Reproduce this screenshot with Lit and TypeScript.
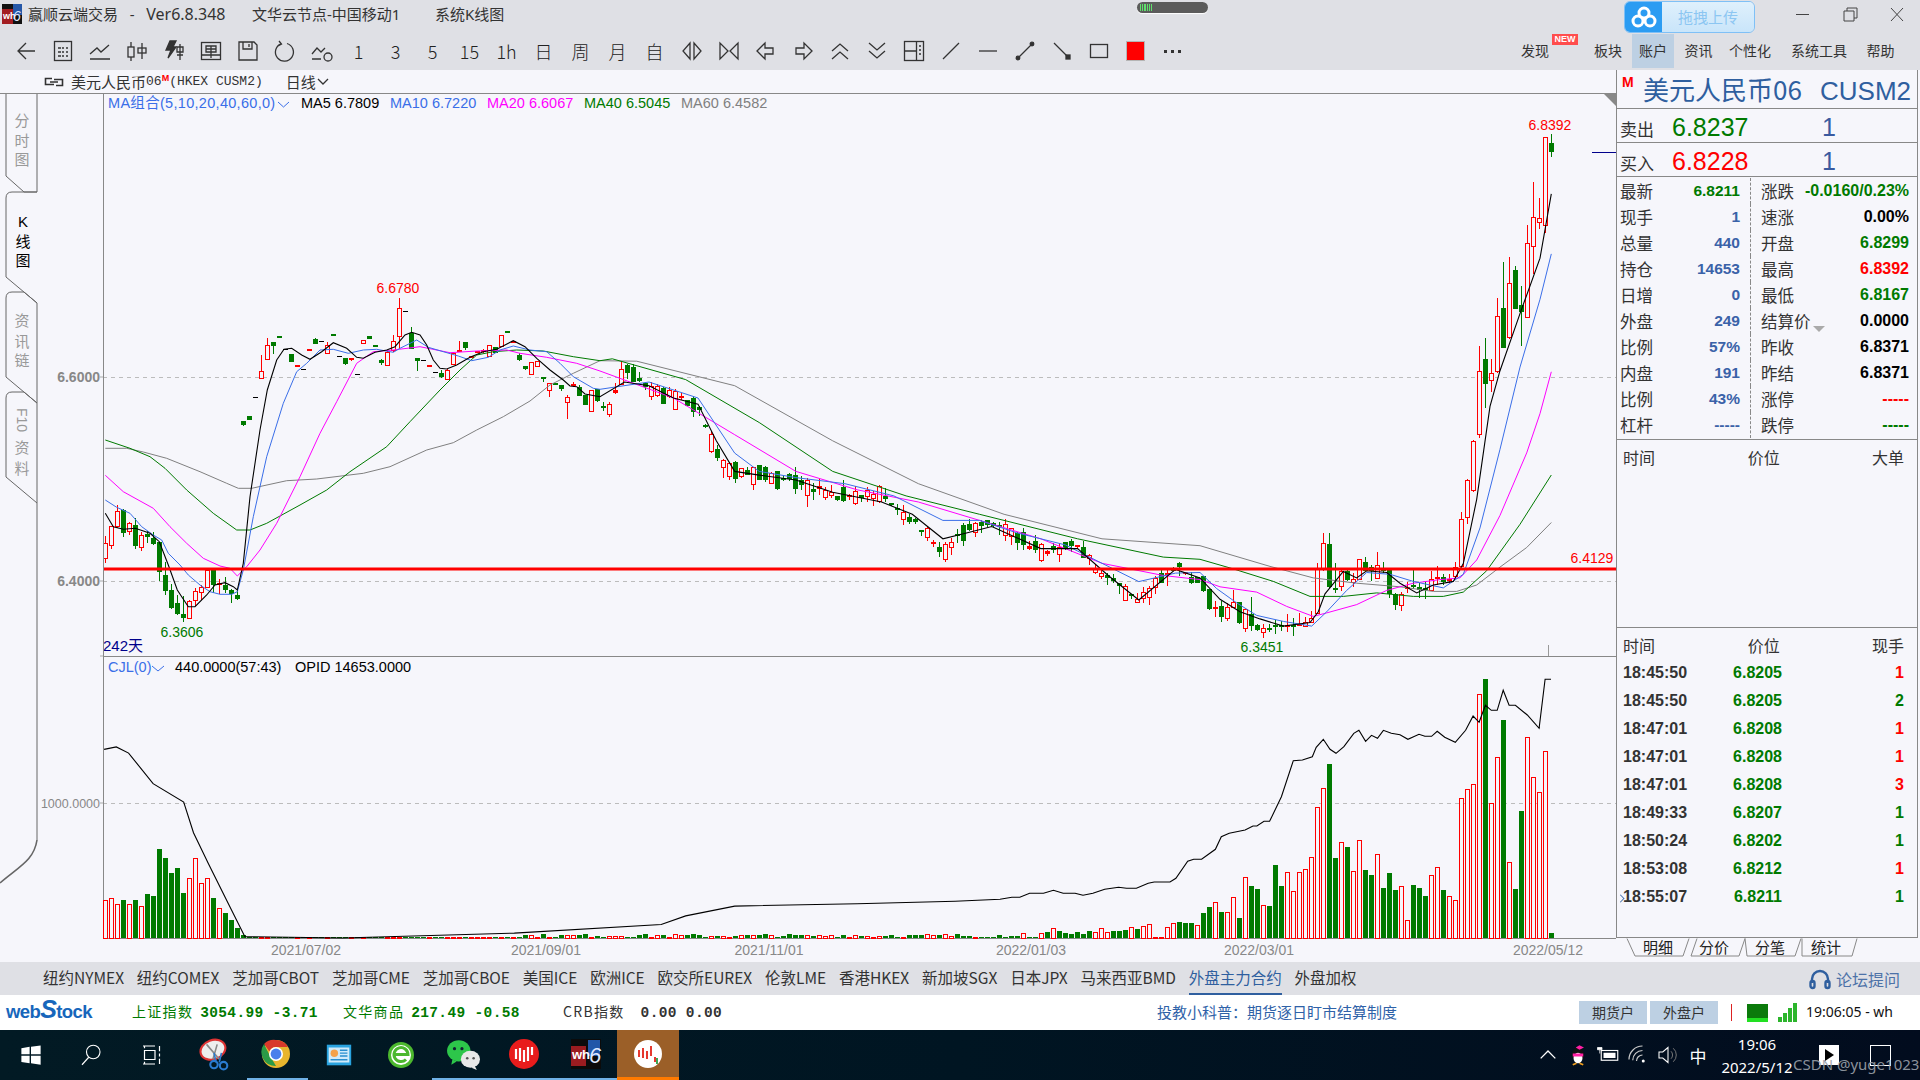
import { LitElement, html, svg, css, nothing } from 'lit';
import { customElement } from 'lit/decorators.js';

type Pt = number[];
const BG = '#f6f6fb';
const RED = '#ff0000';
const GREEN = '#007a00';

// candles read off the chart: [kind, bodyTop, bodyBottom, wickTop, wickBottom], kind 1 red, 0 green, 2 black dash
const LEFT: number[][] = [
  [1,818,862,798,878],[1,768,826,768,836],[1,724,770,706,775],[0,720,788,716,800],[1,760,785,757,795],[0,766,830,745,836],
  [1,796,832,785,842],[0,793,803,782,818],[0,803,822,785,825],[0,817,908,817,932],[0,915,962,875,975],[0,960,1014,942,1016],
  [0,1000,1034,975,1034],[0,1033,1046,978,1055],[1,992,1042,990,1042],[1,962,990,955,1008],[1,950,964,945,990],[1,900,952,895,955],
  [0,900,945,895,970],[1,940,946,928,972],[0,945,960,922,968],[0,960,972,958,998],[0,976,988,960,990],[0,452,465,452,468],
  [0,438,450,438,450],[2,381,383,381,383],[1,302,322,255,322],[1,226,268,205,268],[0,216,228,216,252],[0,198,204,198,204],
  [2,236,238,236,238],[0,252,276,252,276],[1,286,290,286,290],[2,298,300,298,300],[1,238,242,238,242],[0,208,222,205,222],
  [2,214,216,214,216],[1,226,250,216,252],[0,192,198,192,198],[2,259,261,259,261],[0,265,282,265,286],[1,265,272,265,272],
  [2,313,315,313,315],[1,211,221,211,221],[0,198,206,198,206],[0,226,231,226,231],[0,270,278,266,285],[1,246,284,240,284],
  [1,212,240,195,245],[1,115,200,85,238],[2,124,126,124,126],[0,188,236,172,236],[0,265,275,265,302],[2,271,273,271,273],
  [1,286,290,286,290],[2,307,309,307,309],[0,310,323,300,323],[1,300,328,296,330],[1,250,284,245,284],[1,239,246,213,246],
  [0,217,234,217,240],[1,258,262,258,262],[1,244,250,244,250],[1,241,246,238,250],[1,224,256,224,258],[0,232,250,232,250],
  [1,194,228,194,228],[0,184,188,184,188],[1,212,216,212,216],[0,255,270,250,272],[0,289,299,289,299],[1,275,310,275,310],
  [1,272,286,272,286],[0,322,326,322,335],[1,340,360,340,380],[0,338,342,338,342],[0,346,358,346,362],[1,382,398,376,446],
  [1,341,348,335,350],[0,350,376,345,376],[0,375,404,375,404],[1,361,424,361,424],[0,358,395,358,395],
];
// newest first, from candle 241 backwards
const RIGHT: number[][] = [
  [0,92,118,68,132],[1,75,320,75,345],[1,303,315,245,333],[1,300,382,202,460],[1,371,577,322,580],[0,547,566,492,660],
  [0,448,556,437,556],[1,485,635,412,640],[0,554,665,426,665],[1,578,733,526,735],[1,735,754,697,790],[0,697,766,638,835],
  [1,732,908,660,918],[1,928,1066,925,1070],[1,1037,1140,1034,1160],[1,1146,1278,1126,1280],[1,1280,1305,1265,1305],[1,1314,1320,1300,1325],
  [0,1308,1322,1300,1330],[1,1308,1313,1277,1330],[1,1312,1342,1292,1345],[0,1337,1343,1320,1368],[0,1335,1342,1325,1365],[0,1330,1335,1288,1340],
  [1,1336,1342,1322,1352],[1,1354,1384,1350,1402],[0,1356,1388,1352,1400],[0,1288,1356,1288,1365],[0,1284,1290,1266,1295],[1,1273,1310,1238,1312],
  [0,1280,1292,1275,1318],[0,1266,1290,1252,1292],[1,1258,1314,1258,1316],[1,1313,1322,1296,1335],[0,1290,1316,1285,1320],[1,1292,1334,1288,1346],
  [0,1339,1345,1268,1352],[0,1216,1335,1184,1338],[1,1213,1284,1184,1292],[1,1285,1408,1268,1410],[1,1423,1433,1404,1436],[1,1433,1443,1420,1448],
  [1,1438,1443,1408,1445],[0,1442,1446,1422,1472],[1,1443,1447,1412,1462],[0,1443,1448,1432,1458],[0,1443,1447,1428,1466],[0,1450,1454,1440,1462],
  [1,1451,1462,1440,1478],[0,1443,1456,1440,1460],[0,1412,1445,1364,1458],[1,1398,1452,1398,1462],[0,1378,1436,1378,1440],[1,1378,1392,1345,1394],
  [1,1392,1424,1380,1430],[0,1388,1420,1375,1434],[1,1392,1396,1375,1420],[0,1340,1397,1340,1400],[0,1306,1347,1306,1350],
];
// the run between both crops follows this path (overview coordinates)
const MID_PATH: Pt[] = [[470,325],[497,335],[510,300],[530,318],[570,330],[585,370],[595,385],[620,388],[650,392],[680,405],[720,405],[745,425],[770,450],[790,432],[810,428],[850,450],[880,445],[900,470],[930,490],[960,462],[985,480],[1010,505],[1040,515],[1065,510]];

const z9 = (p: Pt[]) => p.map(([x, y]) => [100 + x / 3, 270 + y / 3]);
const z10 = (p: Pt[]) => p.map(([x, y]) => [1200 + x / 3, 110 + y / 2.8]);
const z12 = (p: Pt[]) => p.map(([x, y]) => [1000 + x / 2.53, 660 + y / 3]);
const ov = (p: Pt[]) => p.map(([x, y]) => [x * 1.2245, y * 1.2245]);
const pathOf = (p: Pt[]) => 'M' + p.map(([x, y]) => `${x.toFixed(1)} ${y.toFixed(1)}`).join('L');
const xOf = (i: number) => 105.33 + 6 * i;

let seed = 7;
const rnd = () => { seed = (seed * 16807) % 2147483647; return seed / 2147483647; };

function guideAt(x: number) {
  const pts = ov(MID_PATH);
  for (let k = 1; k < pts.length; k++) {
    if (x <= pts[k][0]) {
      const [a, b] = [pts[k - 1], pts[k]];
      return a[1] + ((b[1] - a[1]) * (x - a[0])) / (b[0] - a[0]);
    }
  }
  return pts[pts.length - 1][1];
}

interface Candle { k: number; top: number; bot: number; wt: number; wb: number }
const candles: Candle[] = [];
LEFT.forEach(([k, a, b, c, d]) => candles.push({ k, top: 270 + a / 3, bot: 270 + b / 3, wt: 270 + c / 3, wb: 270 + d / 3 }));
for (let i = 83; i < 183; i++) {
  const g = guideAt(xOf(i));
  const h = 2 + rnd() * rnd() * 20;
  const k = rnd() > 0.55 ? 1 : 0;
  const top = g - h / 2 + (rnd() - 0.5) * 6;
  candles.push({ k, top, bot: top + h, wt: top - rnd() * rnd() * 10, wb: top + h + rnd() * rnd() * 12 });
}
[...RIGHT].reverse().forEach(([k, a, b, c, d]) => candles.push({ k, top: 110 + a / 2.8, bot: 110 + b / 2.8, wt: 110 + c / 2.8, wb: 110 + d / 2.8 }));

const MA5 = [...z9([[16,730],[40,770],[70,778],[106,775],[150,790],[178,815],[205,885],[232,960],[265,1010],[285,1010],[320,975],[345,945],[375,938],[400,950],[412,960],[430,880],[450,680],[480,480],[502,360],[530,270],[552,238],[575,235],[605,255],[630,268],[665,245],[700,218],[740,235],[770,262],[790,265],[825,247],[860,240],[885,230],[915,195],[935,187],[960,195],[980,225],[1000,270],[1020,295],[1040,297],[1070,285],[1110,262],[1150,245],[1190,238],[1215,225],[1240,212],[1275,230],[1310,265],[1350,300],[1390,330],[1410,348],[1430,350],[1455,372],[1500,380]]),
  ...ov([[510,312],[530,315],[550,325],[570,330],[585,360],[600,385],[620,388],[650,392],[680,402],[720,410],[745,420],[770,440],[790,435],[810,430],[850,448],[880,448],[905,470],[930,490],[960,465]]),
  ...z10([[0,1310],[60,1370],[120,1405],[180,1425],[250,1445],[330,1435],[355,1405],[375,1355],[430,1292],[470,1310],[500,1290],[560,1295],[600,1325],[650,1352],[700,1330],[760,1320],[790,1270],[830,1090],[870,830],[900,730],[960,570],[1020,415],[1054,235]])];
const MA10 = [...z9([[16,690],[50,712],[90,730],[125,770],[160,795],[185,810],[205,850],[240,885],[265,915],[300,945],[330,965],[360,973],[395,973],[412,965],[430,900],[460,740],[500,560],[550,400],[590,305],[620,280],[660,240],[700,238],[745,250],[790,240],[830,238],[880,247],[900,235],[950,210],[985,232],[1030,245],[1075,258],[1115,272],[1165,262],[1200,240],[1240,228],[1290,240],[1340,245],[1380,280],[1420,320],[1480,355],[1500,358]]),
  ...ov([[530,312],[570,325],[600,370],[620,385],[650,390],[690,395],[730,405],[770,425],[800,425],[830,435],[870,445],[900,460],[930,475],[960,468]]),
  ...z10([[0,1295],[50,1340],[110,1380],[170,1415],[250,1432],[335,1445],[380,1405],[440,1345],[500,1295],[570,1300],[640,1320],[730,1338],[790,1300],[840,1170],[900,950],[960,720],[1020,530],[1054,403]])];
const MA20 = [...z9([[16,616],[70,665],[160,715],[210,770],[260,820],[310,865],[360,888],[390,895],[412,918],[440,890],[480,840],[530,760],[600,620],[660,490],[710,395],[770,280],[820,245],[880,240],[960,230],[1050,248],[1130,243],[1220,240],[1260,250],[1340,262],[1430,280],[1500,303]]),
  ...ov([[550,325],[600,355],[650,385],[700,400],[750,410],[800,425],[850,440],[900,460],[950,470]]),
  ...z10([[0,1315],[60,1335],[170,1350],[260,1390],[340,1418],[380,1408],[470,1385],[560,1345],[640,1325],[720,1315],[780,1310],[830,1260],[900,1135],[980,960],[1020,850],[1054,733]])];
const MA40 = [...z9([[16,510],[90,535],[150,560],[195,595],[260,660],[340,730],[410,780],[450,780],[500,760],[600,705],[680,660],[750,605],[860,530],[930,455],[1020,360],[1080,300],[1130,255],[1180,245],[1250,240],[1330,243],[1420,260],[1500,272]]),
  ...ov([[500,293],[560,310],[620,345],[680,385],[740,405],[800,420],[880,440],[950,455]]),
  ...z10([[0,1258],[100,1285],[220,1320],[330,1362],[430,1362],[530,1352],[640,1362],[730,1362],[790,1350],[860,1290],[960,1160],[1054,1022]])];
const MA60 = [...z9([[16,535],[80,535],[130,546],[200,565],[300,605],[380,640],[415,655],[455,655],[560,632],[650,627],[790,610],[870,590],[980,540],[1060,518],[1130,480],[1210,440],[1290,393],[1350,345],[1420,310],[1500,272]]),
  ...ov([[520,295],[600,315],[680,360],[750,395],[820,420],[900,440]]),
  ...z10([[0,1220],[210,1278],[340,1310],[470,1325],[600,1335],[700,1348],[770,1348],[830,1330],[900,1280],[980,1225],[1054,1155]])];
const CJL = [...ov([[85,612],[95,610],[105,615],[125,640],[150,655],[158,680],[170,705],[185,735],[200,765],[280,766],[420,762],[540,755],[560,748],[600,740],[700,738],[780,736]]),
  ...z12([[0,718],[30,712],[50,712],[75,700],[110,700],[135,691],[160,700],[190,700],[210,706],[235,700],[265,688],[300,682],[320,685],[345,685],[375,670],[390,666],[430,666],[445,655],[475,604],[490,598],[510,598],[545,568],[560,530],[580,520],[620,510],[640,498],[650,498],[668,484],[682,484],[712,410],[742,302],[765,300],[790,290],[800,262],[818,238],[835,268],[850,280],[870,260],[895,220],[908,211],[925,244],[940,226],[955,235],[970,211],[990,220],[1012,224],[1032,238],[1060,223],[1075,229],[1092,229],[1106,214],[1125,232],[1152,247],[1178,211],[1197,168],[1212,187],[1228,136],[1243,151],[1258,151],[1273,91],[1288,136],[1304,136],[1334,165],[1364,205],[1379,58],[1394,58]])];

// volume bar tops in crop coordinates, newest first: [isRed, top]
const VOL_RIGHT: number[][] = [[0,820],[1,274],[1,397],[1,352],[1,232],[0,453],[0,687],[1,607],[0,180],[1,292],[1,430],[0,58],[1,103],[1,373],[1,388],[1,415],[1,720],[1,709],[0,690],[1,622],[1,646],[0,708],[0,684],[0,675],[1,781],[1,679],[0,690],[0,639],[0,684],[1,583],[0,645],[0,630],[1,541],[1,634],[0,561],[1,547],[0,594],[0,312],[1,385],[1,442],[1,592],[1,628],[1,637],[1,694],[1,637],[0,678],[0,615],[0,738],[1,736],[0,687],[0,678],[1,652],[0,774],[1,712],[1,757],[0,756],[1,727],[0,741],[0,759],[1,796],[0,789],[0,789],[0,786],[1,790],[1,802],[1,832],[1,832],[1,793],[1,799],[0,807],[1,802],[0,811],[0,813],[0,813],[1,817],[1,805],[1,817],[0,813],[0,823],[0,816],[0,823],[0,820],[0,813],[1,805],[0,816],[1,820],[0,832],[0,832],[1,820],[0,828],[0,828],[0,832],[0,826]];
const VOL_LEFT = [38,40,34,38,34,38,32,44,42,89,80,65,70,45,60,80,55,60,40,30,25,18,10,3];
const volumes: { red: boolean; h: number }[] = [];
for (let i = 0; i < 242; i++) {
  const back = 241 - i;
  if (back < VOL_RIGHT.length) volumes.push({ red: VOL_RIGHT[back][0] === 1, h: (835 - VOL_RIGHT[back][1]) / 3 });
  else if (i < VOL_LEFT.length) volumes.push({ red: candles[i].k === 1, h: VOL_LEFT[i] });
  else volumes.push({ red: candles[i].k === 1, h: i < 70 ? 0.8 : 1 + rnd() * 3 });
}

const QUOTES: [string, string, string, string, string, string][] = [
  ['最新', '6.8211', 'g', '涨跌', '-0.0160/0.23%', 'g'],
  ['现手', '1', 'b', '速涨', '0.00%', 'k'],
  ['总量', '440', 'b', '开盘', '6.8299', 'g'],
  ['持仓', '14653', 'b', '最高', '6.8392', 'r'],
  ['日增', '0', 'b', '最低', '6.8167', 'g'],
  ['外盘', '249', 'b', '结算价', '0.0000', 'k'],
  ['比例', '57%', 'b', '昨收', '6.8371', 'k'],
  ['内盘', '191', 'b', '昨结', '6.8371', 'k'],
  ['比例', '43%', 'b', '涨停', '-----', 'r'],
  ['杠杆', '-----', 'b', '跌停', '-----', 'g'],
];
const TICKS: [string, string, string, string][] = [
  ['18:45:50', '6.8205', '1', 'r'], ['18:45:50', '6.8205', '2', 'g'], ['18:47:01', '6.8208', '1', 'r'],
  ['18:47:01', '6.8208', '1', 'r'], ['18:47:01', '6.8208', '3', 'r'], ['18:49:33', '6.8207', '1', 'g'],
  ['18:50:24', '6.8202', '1', 'g'], ['18:53:08', '6.8212', '1', 'r'], ['18:55:07', '6.8211', '1', 'g'],
];
const EXCHANGES = ['纽约NYMEX', '纽约COMEX', '芝加哥CBOT', '芝加哥CME', '芝加哥CBOE', '美国ICE', '欧洲ICE', '欧交所EUREX', '伦敦LME', '香港HKEX', '新加坡SGX', '日本JPX', '马来西亚BMD', '外盘主力合约', '外盘加权'];

const ico = (body: unknown) => html`<svg class="ico" viewBox="0 0 24 24" width="24" height="24">${body}</svg>`;
const TOOLS: unknown[] = [
  ico(svg`<path d="M21 12H5M12 4l-8 8 8 8"/>`),
  ico(svg`<rect x="3.5" y="2.5" width="17" height="19"/><path d="M7 9h3M11 9h2M15 9h2M7 13h3M11 13h2M15 13h2M7 17h3M11 17h2M15 17h2"/>`),
  ico(svg`<path d="M2 15l7-6 4 4 8-7M2 20h20"/>`),
  ico(svg`<rect x="3" y="8" width="6" height="10"/><path d="M6 3v5M6 18v4M17 4v16"/><rect x="13" y="9" width="8" height="5"/>`),
  ico(svg`<path d="M8 2h6l-3 6h3L6 19l3-8H4z" class="fill"/><path d="M15 8h6v5h-6zM15 16h6M18 5v16"/>`),
  ico(svg`<rect x="2.5" y="3.5" width="19" height="17"/><path d="M7 7h10v6H7zM7 10h10M12 7v12M2.5 16h19"/>`),
  ico(svg`<path d="M3 3h15l3 3v15H3zM7 3v7h9V3M13 5v3"/>`),
  ico(svg`<path d="M14 4.5a9 9 0 1 1-6 .3M6 2l2.5 3L5 7"/>`),
  ico(svg`<path d="M2 15l5-6 4 4 4-4M2 20h9"/><circle cx="18" cy="18" r="4"/>`),
  '1', '3', '5', '15', '1h', '日', '周', '月', '自',
  ico(svg`<path d="M10 4v16l-7-8zM14 4v16l7-8z"/>`),
  ico(svg`<path d="M3 4v16l8-8zM21 4v16l-8-8z"/>`),
  ico(svg`<path d="M3 12l8-8v5h8v6h-8v5z"/>`),
  ico(svg`<path d="M21 12l-8-8v5H5v6h8v5z"/>`),
  ico(svg`<path d="M4 12l8-7 8 7M4 20l8-7 8 7"/>`),
  ico(svg`<path d="M4 4l8 7 8-7M4 12l8 7 8-7"/>`),
  ico(svg`<rect x="2.5" y="2.5" width="19" height="19"/><path d="M2.5 12h12M14.5 2.5v19M17 7h2M17 11h2M17 15h2"/>`),
  ico(svg`<path d="M4 20L20 4"/>`),
  ico(svg`<path d="M3 12h18"/>`),
  ico(svg`<path d="M5 19L19 5"/><circle cx="5" cy="19" r="1.8" class="fill"/><circle cx="19" cy="5" r="1.8" class="fill"/>`),
  ico(svg`<path d="M4 4l15 15"/><rect x="16" y="16" width="4" height="4" class="fill"/>`),
  ico(svg`<rect x="3.5" y="5.5" width="17" height="13"/>`),
  html`<span class="red-square"></span>`,
  html`<span class="more"><i></i><i></i><i></i></span>`,
];

@customElement('app-root')
export class AppRoot extends LitElement {
  static styles = css`
    :host { display: block; width: 1920px; height: 1080px; overflow: hidden; background: #f6f6fb;
      font-family: "Noto Sans CJK SC", "Noto Sans", sans-serif; color: #333; position: relative; }
    svg text { font-family: "Liberation Sans", "Noto Sans CJK SC", sans-serif; }

    .titlebar { height: 34px; background: #dfe0e5; display: flex; align-items: center; font-size: 15px; position: relative; box-sizing: border-box; padding-bottom: 7px; font-family: "Noto Sans", "Noto Sans CJK SC", sans-serif; }
    .logo { width: 20px; height: 20px; margin: 0 6px 0 2px; flex: none; }
    .ver { width: 224px; white-space: pre; }
    .ver i { font-style: normal; font-size: 16px; }
    .node { width: 183px; }
    .pill { position: absolute; left: 1137px; top: 2px; width: 71px; height: 11px; border-radius: 6px; background: #5b5b5b; display: flex; gap: 1px; padding: 2px 3px; box-sizing: border-box; box-shadow: 0 1px 1px #fff; }
    .pill i { width: 1.2px; background: #5fe06c; }
    .upload { position: absolute; left: 1624px; top: 1px; width: 131px; height: 32px; border-radius: 6px; display: flex; overflow: hidden; border: 1px solid #7fc0f6; box-sizing: border-box; }
    .upload .cl { width: 37px; background: #2b9cf2; display: flex; align-items: center; justify-content: center; }
    .upload .tx { flex: 1; background: linear-gradient(#dff0fc, #c9e5fa); color: #8cc6f2; text-align: center; line-height: 30px; font-family: "Noto Sans CJK SC", sans-serif; font-size: 15px; }
    .winbtns { position: absolute; left: 1779px; top: 3px; display: flex; }
    .winbtns svg { width: 47px; height: 24px; fill: none; stroke: #444; stroke-width: 1; }

    .toolbar { height: 36px; box-sizing: border-box; background: #dfe0e5; display: flex; align-items: center; padding: 0 20px 2px 7px; }
    .tool { width: 37px; height: 30px; display: flex; align-items: center; justify-content: center; font-size: 18px; font-weight: 300; color: #222; flex: none; }
    .ico { fill: none; stroke: #333; stroke-width: 1.3; }
    .ico .fill { fill: #333; }
    .red-square { width: 17px; height: 18px; background: #ff0000; border: 1px solid #b5b5b5; }
    .more { display: flex; gap: 4px; }
    .more i { width: 3px; height: 3px; background: #333; }
    .menu { margin-left: auto; display: flex; height: 34px; box-sizing: border-box; align-self: flex-start; font-size: 14px; }
    .menu span { display: flex; align-items: center; justify-content: center; position: relative; padding-bottom: 3px; box-sizing: border-box; }
    .menu .on { background: #bdd0e3; }
    .new { position: absolute; left: 48px; top: 0; width: 26px; height: 11px; background: #ff4d4d; color: #fff; font: normal bold 9px/11px "Liberation Sans", sans-serif; text-align: center; }

    .body { display: flex; height: 892px; }
    .left { width: 1616px; display: flex; flex-direction: column; }
    .subhead { height: 23px; border-bottom: 1px solid #888; display: flex; align-items: center; padding-left: 44px; font-size: 15px; line-height: 22px; }
    .subhead svg { margin-right: 7px; }
    .subhead sup { color: #f00; font-size: 9px; font-weight: 700; line-height: 1; margin-top: -6px; font-family: "Liberation Sans", sans-serif; }
    .subhead .mono { font: 13px "Liberation Mono", monospace; }
    .subhead .cycle { margin-left: 23px; display: flex; align-items: center; gap: 1px; }
    .chartrow { display: flex; flex: 1; }
    .rail { width: 103px; height: 868px; display: block; }
    .chart { width: 1513px; height: 868px; display: block; }

    .panel { width: 304px; display: flex; flex-direction: column; }
    .box { height: 867px; border-left: 1px solid #888; border-right: 1px solid #888; border-bottom: 1px solid #888; width: 300px; display: flex; flex-direction: column; }
    .head { height: 38px; border-bottom: 1px solid #888; display: flex; align-items: baseline; padding-left: 26px; position: relative; font-size: 26px; line-height: 38px; color: #2f5f9f; justify-content: space-between; padding-right: 6px; flex: none; }
    .head b { position: absolute; left: 5px; top: 5px; font: bold 14px/14px "Liberation Sans", sans-serif; color: #f00; }
    .head .code { font-family: "Liberation Sans", sans-serif; }
    .ask { height: 33px; border-bottom: 1px solid #888; display: flex; align-items: center; position: relative; font-family: "Liberation Sans", sans-serif; font-size: 25px; flex: none; }
    .ask label { width: 55px; padding: 7px 0 0 3px; font: 17px/24px "Noto Sans CJK SC", sans-serif; box-sizing: border-box; }
    .ask .p { width: 150px; padding-top: 4px; }
    .ask .q { color: #3a5a9f; padding-top: 4px; }
    .quotes { height: 261px; padding-top: 1px; border-bottom: 1px solid #888; display: grid; grid-template-columns: 133px 1fr; grid-auto-rows: 26px; flex: none; }
    .q-cell { display: flex; justify-content: space-between; align-items: center; font-size: 16.5px; padding: 0 10px 0 3px; }
    .q-cell.rt { padding: 0 8px 0 10px; border-left: 1px dashed #888; }
    .q-cell b { font: bold 15.5px "Liberation Sans", sans-serif; }
    .q-cell.rt b { font-size: 16px; }
    .q-cell .drop { display: inline-block; width: 0; height: 0; border: 6px solid transparent; border-top: 6px solid #aaa; border-bottom: 0; margin: 0 0 -4px 2px; }
    .b { color: #3a62a8; } .g { color: #007a00; } .r { color: #f00; } .k { color: #000; }
    .th { display: grid; grid-template-columns: 1fr 1fr 1fr; font-size: 16px; padding: 0 13px 0 6px; height: 34px; align-items: center; flex: none; }
    .th span:nth-child(2) { padding-left: 31px; }
    .th span:nth-child(3) { text-align: right; }
    .bigs { height: 153px; border-bottom: 1px solid #888; flex: none; }
    .ticks { flex: 1; position: relative; margin-top: -3px; }
    .tick { display: grid; grid-template-columns: 109px 50px 1fr; padding: 0 13px 0 6px; height: 28px; align-items: center; font: bold 16px "Liberation Sans", sans-serif; }
    .tick em { font-style: normal; text-align: right; }
    .tick .p { color: #007a00; text-align: right; }
    .tick .t { color: #333; position: relative; }
    .marker { position: absolute; left: -6px; top: 7px; width: 6px; height: 6px; border-top: 1.5px solid #2f5f9f; border-right: 1.5px solid #2f5f9f; transform: rotate(45deg) scale(.8); }
    .tabs { height: 25px; display: block; margin-top: -1px; }

    .xtabs { height: 33px; background: #dfe0e5; display: flex; align-items: center; padding-left: 43px; gap: 12.8px; font-size: 15.5px; position: relative; white-space: nowrap; }
    .xtabs span { height: 33px; line-height: 31px; box-sizing: border-box; }
    .xtabs .on { color: #2f5f9f; border-bottom: 2px solid #2f5f9f; }
    .forum { position: absolute; left: 1809px; top: 0; height: 33px; display: flex; align-items: center; gap: 5px; color: #4d72a8; font-size: 16px; }

    .status { height: 35px; box-sizing: border-box; padding-bottom: 3px; background: #fff; display: flex; align-items: center; font-size: 14px; position: relative; white-space: nowrap; }
    .brand { width: 132px; padding-left: 6px; box-sizing: border-box; font: bold 18.5px "Liberation Sans", sans-serif; color: #1766bb; letter-spacing: -.6px; }
    .brand i { font-size: 25px; line-height: 20px; }
    .idx { color: #007a00; letter-spacing: 1.3px; }
    .num { font: bold 14.5px "Liberation Mono", monospace; color: #007a00; letter-spacing: .35px; margin-left: 7px; }
    .dark, .dark .num { color: #333; }
    .tip { position: absolute; left: 1157px; color: #2f62a8; font-size: 15px; }
    .acct { position: absolute; left: 1579px; top: 6px; display: flex; gap: 3px; }
    .acct span { width: 68px; height: 23px; background: #bdd0e3; text-align: center; line-height: 23px; }
    .sig { position: absolute; left: 1731px; top: 7px; height: 22px; display: flex; align-items: center; }
    .sig svg { display: block; }
    .clock { position: absolute; left: 1806px; font: 14px "Noto Sans", sans-serif; color: #111; }

    .taskbar { height: 50px; background: linear-gradient(90deg, #021a24, #001522 50%, #020c1e); display: flex; align-items: center; position: relative; color: #fff; }
    .slot { width: 61.7px; height: 50px; display: flex; align-items: center; justify-content: center; flex: none; position: relative; box-sizing: border-box; }
    .slot.open { border-bottom: 2px solid #6fb1e6; }
    .slot.active { background: #9b5f28; border-bottom: 3px solid #ff7a00; }
    .slot.nudge svg { margin-right: 4px; }
    .tray { position: absolute; left: 1533px; top: 0; height: 50px; display: flex; align-items: center; }
    .tray .t { width: 30px; display: flex; justify-content: center; }
    .ime { font-size: 17px; }
    .time { position: absolute; left: 1717px; top: 3px; width: 80px; text-align: center; font: 15px/23px "Noto Sans", sans-serif; }
    .play { position: absolute; left: 1819px; top: 15px; width: 20px; height: 20px; background: #fff; }
    .play::after { content: ""; position: absolute; left: 6px; top: 4px; border-left: 9px solid #000; border-top: 6px solid transparent; border-bottom: 6px solid transparent; }
    .note { position: absolute; left: 1870px; top: 15px; width: 19px; height: 19px; border: 1px solid #fff; }
    .mark { position: absolute; left: 1793px; top: 24px; color: #9aa0a8; font: 15px "Noto Sans", sans-serif; opacity: .9; }
  `;

  private renderRail() {
    const lbl = (x: number, chars: [string, number][], fill: string) =>
      chars.map(([c, y]) => svg`<text x=${x} y=${y} text-anchor="middle" font-size="15" fill=${fill}>${c}</text>`);
    return html`<svg class="rail" viewBox="0 94 103 868">
      <g fill="none" stroke="#666" stroke-width="1">
        <path d="M6 94V176L24 192H37V94"/>
        <path d="M6 277V198Q6 192 12 192H37M6 277L37 303" stroke="#666"/>
        <path d="M37 403V303L24 292H12Q6 292 6 298V377L37 403"/>
        <path d="M37 840V403L24 392H12Q6 392 6 398V477L37 503"/>
        <path d="M37 840C34 860 20 866 0 883" stroke-width="1.6"/>
        <path d="M100 377H103M100 581H103M100 803H103M100 656H103" stroke="#aaa"/>
      </g>
      ${lbl(22, [['分', 126], ['时', 146], ['图', 165]], '#999')}
      ${lbl(23, [['K', 227], ['线', 247], ['图', 266]], '#000')}
      ${lbl(22, [['资', 326], ['讯', 347], ['链', 366]], '#999')}
      <text x="17" y="408" font-size="14" fill="#999" transform="rotate(90 17 408)">F10</text>
      ${lbl(22, [['资', 453], ['料', 474]], '#999')}
      <text x="100" y="382" text-anchor="end" font-size="14" font-weight="700" fill="#888">6.6000</text>
      <text x="100" y="586" text-anchor="end" font-size="14" font-weight="700" fill="#888">6.4000</text>
      <text x="100" y="808" text-anchor="end" font-size="12.5" fill="#888">1000.0000</text>
    </svg>`;
  }

  private renderCandle(c: Candle, i: number) {
    const x = Math.round(xOf(i)) + 0.5;
    if (c.k === 2) return svg`<path d="M${x - 2.5} ${Math.round(c.top) + 0.5}h5" stroke="#000"/>`;
    const color = c.k === 1 ? RED : GREEN;
    const h = c.bot - c.top;
    const t = Math.round(c.top);
    const flat = h < 3;
    const solid = c.k === 0 || flat;
    return svg`
      <path d="M${x} ${c.wt}V${c.wb}" stroke=${color}/>
      <rect x=${solid ? x - 2.5 : x - 2} y=${solid ? t : t + 0.5} width=${solid ? 5 : 4} height=${Math.max(1.5, Math.round(h))}
        fill=${solid ? color : BG} stroke=${solid ? 'none' : color}/>`;
  }

  private renderChart() {
    return html`<svg class="chart" viewBox="103 94 1513 868">
      <g stroke="#bcbcbc" stroke-dasharray="4 4" fill="none">
        <path d="M103 377.5H1616M103 581.5H1616M103 803.5H1616"/>
      </g>
      <g shape-rendering="crispEdges" stroke-width="1">${candles.map((c, i) => this.renderCandle(c, i))}</g>
      <g fill="none" stroke-width="1">
        <path d=${pathOf(MA60)} stroke="#808080"/>
        <path d=${pathOf(MA40)} stroke="#007a00"/>
        <path d=${pathOf(MA20)} stroke="#ff00ff"/>
        <path d=${pathOf(MA10)} stroke="#3a6ee8"/>
        <path d=${pathOf(MA5)} stroke="#000" stroke-width="1.1"/>
      </g>
      <rect x="103" y="567.5" width="1513" height="3" fill=${RED}/>
      <path d="M1592 152.5H1616" stroke="#00008b"/>
      <path d="M1604 94H1616V106Z" fill="#888"/>
      <path d="M1548.5 645V656" stroke="#999"/>

      <g font-size="14">
        <text x="1550" y="130" text-anchor="middle" fill=${RED}>6.8392</text>
        <text x="398" y="293" text-anchor="middle" fill=${RED}>6.6780</text>
        <text x="182" y="637" text-anchor="middle" fill=${GREEN}>6.3606</text>
        <text x="1262" y="652" text-anchor="middle" fill=${GREEN}>6.3451</text>
        <text x="1592" y="563" text-anchor="middle" fill=${RED}>6.4129</text>
        <text x="103" y="651" font-size="15" fill="#00008b">242天</text>
      </g>

      <g font-size="14.5" style="font-family: Roboto, sans-serif">
        <text x="108" y="108" fill="#3a6ee8" letter-spacing=".3">MA组合(5,10,20,40,60,0)</text>
        <path d="M278 102l5.500 5 5.500-5" fill="none" stroke="#3a6ee8"/>
        <text x="301" y="108" fill="#000">MA5 6.7809</text>
        <text x="390" y="108" fill="#3a6ee8">MA10 6.7220</text>
        <text x="487" y="108" fill="#ff00ff">MA20 6.6067</text>
        <text x="584" y="108" fill="#007a00">MA40 6.5045</text>
        <text x="681" y="108" fill="#808080">MA60 6.4582</text>
        <text x="108" y="672" fill="#3a6ee8">CJL(0)</text>
        <path d="M152 666l6 5 6-5" fill="none" stroke="#3a6ee8"/>
        <text x="175" y="672" fill="#000">440.0000(57:43)</text>
        <text x="295" y="672" fill="#000">OPID 14653.0000</text>
      </g>

      <path d="M103 656.5H1616M103 938.5H1616" stroke="#888"/>
      <path d="M103.5 94V938" stroke="#888"/>
      <g shape-rendering="crispEdges">
        ${volumes.map((v, i) => {
          const x = Math.round(xOf(i));
          const y = Math.round(938 - v.h);
          return v.red
            ? svg`<rect x=${x - 2 + 0.5} y=${y + 0.5} width="4" height=${Math.max(938 - y - 0.5, 0.5)} fill=${BG} stroke=${RED}/>`
            : svg`<rect x=${x - 2} y=${y} width="5" height=${938 - y} fill=${GREEN}/>`;
        })}
      </g>
      <path d=${pathOf(CJL)} fill="none" stroke="#000" stroke-width="1.1"/>
      <g font-size="14" fill="#888" text-anchor="middle">
        ${[[306, '2021/07/02'], [546, '2021/09/01'], [769, '2021/11/01'], [1031, '2022/01/03'], [1259, '2022/03/01'], [1548, '2022/05/12']].map(([x, t]) => svg`<text x=${x} y="955">${t}</text>`)}
      </g>
    </svg>`;
  }

  private renderPanel() {
    return html`<div class="panel">
      <div class="box">
        <div class="head"><b>M</b><span>美元人民币06</span><span class="code">CUSM2</span></div>
        <div class="ask"><label>卖出</label><span class="p g">6.8237</span><span class="q">1</span></div>
        <div class="ask"><label>买入</label><span class="p r">6.8228</span><span class="q">1</span></div>
        <div class="quotes">
          ${QUOTES.map(([a, b, bc, c, d, dc]) => html`
            <div class="q-cell lt"><span>${a}</span><b class=${bc}>${b}</b></div>
            <div class="q-cell rt"><span>${c}${c === '结算价' ? html`<i class="drop"></i>` : nothing}</span><b class=${dc}>${d}</b></div>`)}
        </div>
        <div class="th"><span>时间</span><span>价位</span><span>大单</span></div>
        <div class="bigs"></div>
        <div class="th"><span>时间</span><span>价位</span><span>现手</span></div>
        <div class="ticks">
          ${TICKS.map(([t, p, q, c], i) => html`<div class="tick"><span class="t">${i === 8 ? html`<i class="marker"></i>` : nothing}${t}</span><span class="p">${p}</span><em class=${c}>${q}</em></div>`)}
        </div>
      </div>
      <svg class="tabs" viewBox="1616 937 304 25">
        <g stroke="#888" fill=${BG}>
          <path d="M1689 938.500L1683 956H1635L1627 938.500Z" stroke="none"/>
          <path d="M1627 938.500L1635 956H1683L1689 938.500" fill="none"/>
          <path d="M1697 938.500L1691 956H1739L1745 938.500M1745 938.500L1747 956H1795L1801 938.500M1802 938.500L1802 956H1852L1857 938.500" fill="none"/>
        </g>
        <g font-size="15" text-anchor="middle" fill="#222">
          <text x="1658" y="953">明细</text><text x="1714" y="953">分价</text><text x="1770" y="953">分笔</text><text x="1826" y="953">统计</text>
        </g>
      </svg>
    </div>`;
  }

  private renderTaskbar() {
    const s = (w: number, body: unknown) => html`<svg width=${w} height=${w} viewBox="0 0 32 32">${body}</svg>`;
    return html`<div class="taskbar">
      <div class="slot">${s(22, svg`<path d="M2 6l12-2v11H2zM16 4l14-2v13H16zM2 17h12v11L2 26zM16 17h14v13l-14-2z" fill="#fff"/>`)}</div>
      <div class="slot nudge">${s(24, svg`<circle cx="19" cy="12" r="9" fill="none" stroke="#fff" stroke-width="1.5"/><path d="M13 19L4 29" stroke="#fff" stroke-width="1.5"/>`)}</div>
      <div class="slot nudge">${s(24, svg`<path d="M4 4h16M4 28h16M6 10h14v12H6zM26 4v7M26 14v4M26 21v7M6 4v3M6 25v3" fill="none" stroke="#fff" stroke-width="1.6"/>`)}</div>
      <div class="slot nudge">${s(34, svg`<ellipse cx="15" cy="11" rx="12" ry="9" fill="#eee" stroke="#d33" stroke-width="2" transform="rotate(-20 15 11)"/><path d="M9 6l12 14M19 6l-4 14" stroke="#888" stroke-width="1.5"/><circle cx="16" cy="25" r="3.5" fill="none" stroke="#2a7bd0" stroke-width="2"/><circle cx="25" cy="26" r="3.5" fill="none" stroke="#2a7bd0" stroke-width="2"/><path d="M16 14l2 9M23 14l-2 9" stroke="#2a7bd0" stroke-width="1.5"/>`)}</div>
      <div class="slot open nudge">${s(32, svg`<circle cx="16" cy="16" r="14" fill="#e8b52e"/><path d="M16 2a14 14 0 0 1 12 7H16a7 7 0 0 0-6.5 4.500L4 6a14 14 0 0 1 12-4z" fill="#d8392b"/><path d="M4 6l6 12 6 10a14 14 0 0 1-12-22z" fill="#2b9a47"/><circle cx="16" cy="16" r="7" fill="#fff"/><circle cx="16" cy="16" r="5.400" fill="#4a80ec"/>`)}</div>
      <div class="slot">${s(30, svg`<rect x="3" y="5" width="26" height="22" fill="#29a3e0"/><rect x="5" y="8" width="22" height="16" fill="#cfeafa"/><circle cx="11" cy="14" r="4" fill="#f4a14a"/><path d="M17 11h8M17 14h8M17 17h8M7 21h18" stroke="#2a8fd0" stroke-width="1.5"/>`)}</div>
      <div class="slot">${s(32, svg`<circle cx="16" cy="16" r="13" fill="#4cb82e"/><circle cx="16" cy="16" r="10" fill="#fff"/><path d="M9 15.500h14a7 7 0 1 0-2 5" fill="none" stroke="#4cb82e" stroke-width="3"/>`)}</div>
      <div class="slot open">${s(34, svg`<ellipse cx="12" cy="13" rx="11" ry="10" fill="#2dc64a"/><path d="M6 21l-1 5 5-3z" fill="#2dc64a"/><circle cx="8" cy="11" r="1.500" fill="#123"/><circle cx="15" cy="11" r="1.500" fill="#123"/><ellipse cx="23" cy="21" rx="9" ry="8" fill="#e8e8e8"/><path d="M27 27l2 4-5-2z" fill="#e8e8e8"/><circle cx="20" cy="20" r="1.200" fill="#555"/><circle cx="26" cy="20" r="1.200" fill="#555"/>`)}</div>
      <div class="slot open">${s(32, svg`<circle cx="16" cy="16" r="15" fill="#e81c1c"/><path d="M8 21V11M12 23V10M16 24V12M20 23V9M24 17V9" stroke="#fff" stroke-width="2.200"/>`)}</div>
      <div class="slot open">${s(32, svg`<rect x="1" y="1" width="30" height="30" fill="#0b0b0b"/><rect x="1" y="8" width="15" height="20" fill="#9b1c20"/><path d="M18 2h12v16h-12z" fill="#2257a8"/><text x="2" y="21" font-size="13" font-weight="700" fill="#fff">wh</text><text x="19" y="25" font-size="22" font-style="italic" fill="#dfe8ff">6</text>`)}</div>
      <div class="slot active">${s(32, svg`<circle cx="16" cy="16" r="14" fill="#fff"/><path d="M7 19V12M11 20V10M15 21V13M19 18V8M23 24V19" stroke="#e5392f" stroke-width="2"/><path d="M25 26V20" stroke="#3aa655" stroke-width="2"/>`)}</div>
      <div class="tray">
        <span class="t">${s(18, svg`<path d="M3 22L16 9l13 13" fill="none" stroke="#fff" stroke-width="2.400"/>`)}</span>
        <span class="t">${s(24, svg`<ellipse cx="16" cy="16" rx="8" ry="10" fill="#111"/><ellipse cx="16" cy="20" rx="6" ry="7" fill="#fff"/><path d="M9 14h14v4H9z" fill="#ff1fa4"/><path d="M18 3l6 3-6 3zM18 3l-5 3 5 3z" fill="#ff1fa4"/><path d="M9 29l5-2M23 29l-5-2" stroke="#f2a01e" stroke-width="2.500"/>`)}</span>
        <span class="t">${s(24, svg`<rect x="7" y="10" width="22" height="13" fill="none" stroke="#fff" stroke-width="1.500"/><rect x="10" y="13" width="16" height="7" fill="#fff"/><path d="M2 6h6v3H2zM5 9v5" stroke="#fff" fill="#fff"/>`)}</span>
        <span class="t">${s(24, svg`<path d="M4 22a18 18 0 0 1 18-18M9 23a13 13 0 0 1 13-13M14 24a8 8 0 0 1 8-8" fill="none" stroke="#ccc" stroke-width="1.600"/><circle cx="23" cy="24" r="2" fill="#fff"/>`)}</span>
        <span class="t">${s(24, svg`<path d="M4 12h5l7-6v20l-7-6H4z" fill="none" stroke="#fff" stroke-width="1.400"/><path d="M20 11a7 7 0 0 1 0 10M23 7a12 12 0 0 1 0 18" fill="none" stroke="#777" stroke-width="1.300"/>`)}</span>
        <span class="t ime">中</span>
      </div>
      <div class="time">19:06<br />2022/5/12</div>
      <div class="play"></div>
      <div class="note"></div>
      <div class="mark">CSDN @yuge1023</div>
    </div>`;
  }

  render() {
    return html`
      <div class="titlebar">
        <svg class="logo" viewBox="0 0 20 20"><rect width="20" height="20" fill="#111"/><rect y="5" width="11" height="15" fill="#a31d21"/><rect x="11" width="9" height="11" fill="#2657a8"/><text x="1" y="15" font-size="9" font-weight="700" fill="#fff">wh</text><text x="11" y="17" font-size="14" font-style="italic" fill="#dfe8ff">6</text></svg>
        <span class="ver">赢顺云端交易   -   <i>Ver6.8.348</i></span>
        <span class="node">文华云节点-中国移动1</span>
        <span>系统K线图</span>
        <div class="pill">${[...Array(6)].map(() => html`<i></i>`)}</div>
        <div class="upload">
          <div class="cl"><svg width="26" height="24" viewBox="0 0 26 24" fill="none" stroke="#fff" stroke-width="3"><circle cx="13" cy="8" r="5"/><circle cx="7" cy="16" r="5"/><circle cx="19" cy="16" r="5"/></svg></div>
          <div class="tx">拖拽上传</div>
        </div>
        <div class="winbtns">
          <svg viewBox="0 0 47 24"><path d="M17 11.500H30"/></svg>
          <svg viewBox="0 0 47 24"><path d="M18 8h10v10H18zM21 8V5h10v10h-3"/></svg>
          <svg viewBox="0 0 47 24"><path d="M18 5l12 13M30 5L18 18"/></svg>
        </div>
      </div>
      <div class="toolbar">
        ${TOOLS.map((t) => html`<div class="tool">${t}</div>`)}
        <div class="menu">
          <span style="width:62px;margin-right:18px">发现<i class="new">NEW</i></span>
          <span style="width:48px">板块</span>
          <span class="on" style="width:42px">账户</span>
          <span style="width:49px">资讯</span>
          <span style="width:54px">个性化</span>
          <span style="width:84px">系统工具</span>
          <span style="width:39px">帮助</span>
        </div>
      </div>
      <div class="body">
        <div class="left">
          <div class="subhead">
            <svg width="20" height="10" viewBox="0 0 20 10" fill="none" stroke="#333" stroke-width="1.600"><path d="M8 1.500H1.500v6H10M12 8.500h6.500v-6H10M6 5h8"/></svg>
            <span>美元人民币</span><span class="mono">06</span><sup>M</sup><span class="mono"> (HKEX CUSM2)</span>
            <span class="cycle">日线<svg width="12" height="8" viewBox="0 0 12 8" fill="none" stroke="#333" stroke-width="1.300" style="margin:0"><path d="M1 1l5 5 5-5"/></svg></span>
          </div>
          <div class="chartrow">${this.renderRail()}${this.renderChart()}</div>
        </div>
        ${this.renderPanel()}
      </div>
      <div class="xtabs">
        ${EXCHANGES.map((t, i) => html`<span class=${i === 13 ? 'on' : ''}>${t}</span>`)}
        <div class="forum">
          <svg width="22" height="22" viewBox="0 0 22 22" fill="none" stroke="#2f5f9f" stroke-width="2.400"><path d="M3 15V11a8 8 0 0 1 16 0v4"/><rect x="1.500" y="13" width="4" height="7" rx="2"/><rect x="16.500" y="13" width="4" height="7" rx="2"/></svg>
          论坛提问
        </div>
      </div>
      <div class="status">
        <span class="brand">web<i>S</i>tock</span>
        <span class="idx" style="width:211px">上证指数<span class="num">3054.99 -3.71</span></span>
        <span class="idx" style="width:220px">文华商品<span class="num">217.49 -0.58</span></span>
        <span class="idx dark">CRB指数<span class="num">&nbsp;0.00 0.00</span></span>
        <span class="tip">投教小科普：期货逐日盯市结算制度</span>
        <div class="acct"><span>期货户</span><span>外盘户</span></div>
        <div class="sig">
          <svg width="70" height="22" viewBox="0 0 70 22"><path d="M.5 2V19" stroke="#d22"/><rect x="16" y="2" width="21" height="18" fill="#0b7a0b"/><rect x="16" y="16" width="21" height="4" fill="#22e022"/><path d="M48 15h4v5h-4zM53 11h4v9h-4zM58 6h4v14h-4zM63 1h4v19h-4z" fill="#2cb52c" transform="translate(-1 0)"/></svg>
        </div>
        <span class="clock">19:06:05 - wh</span>
      </div>
      ${this.renderTaskbar()}
    `;
  }
}

declare global {
  interface HTMLElementTagNameMap {
    'app-root': AppRoot;
  }
}
